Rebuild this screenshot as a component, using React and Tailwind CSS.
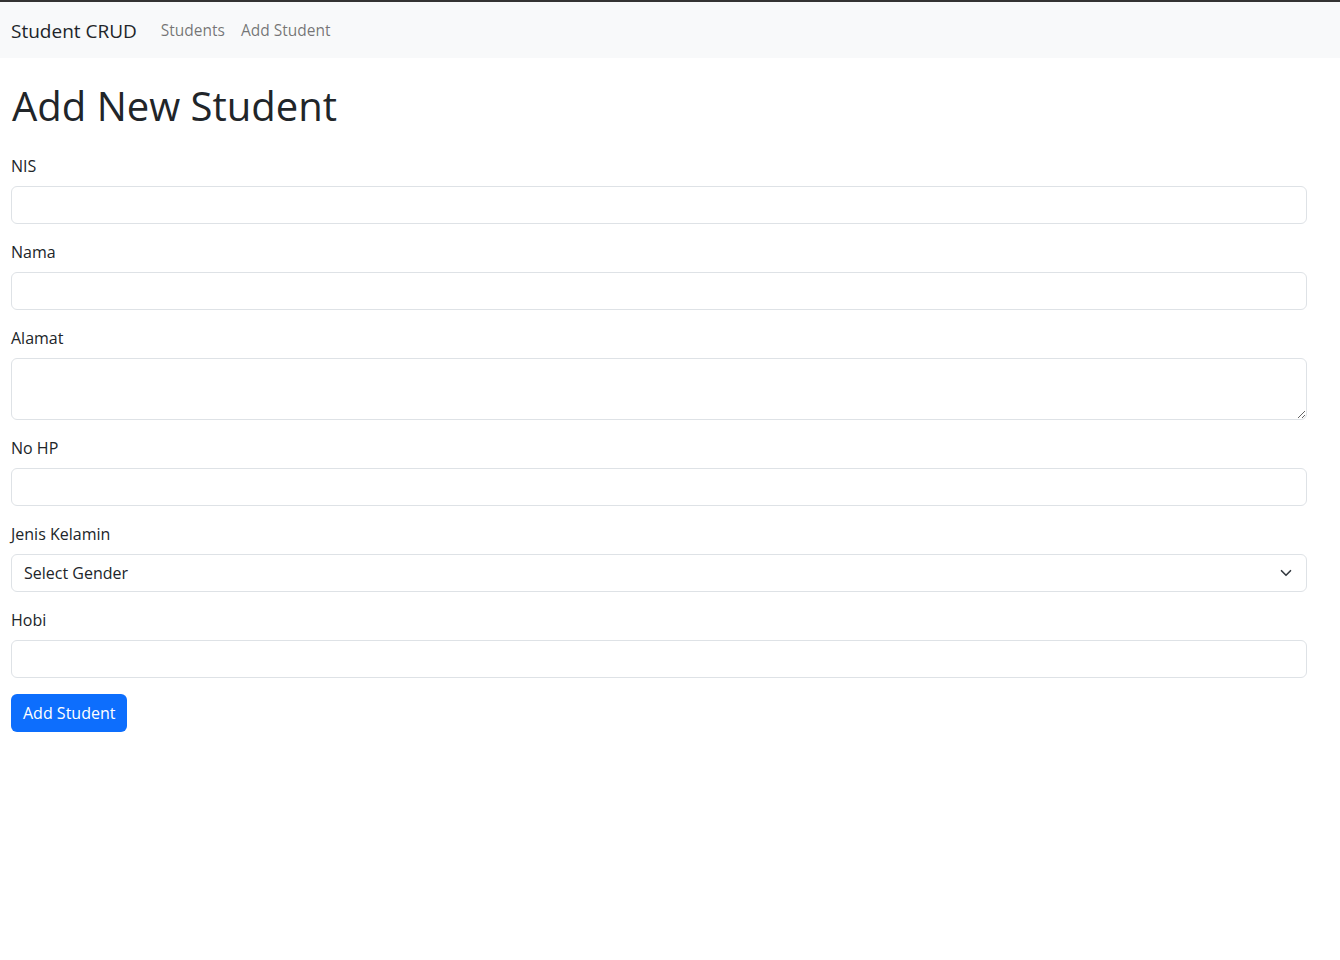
import React from 'react';

const fields = [
  { label: 'NIS', type: 'input' },
  { label: 'Nama', type: 'input' },
  { label: 'Alamat', type: 'textarea' },
  { label: 'No HP', type: 'input' },
  { label: 'Jenis Kelamin', type: 'select' },
  { label: 'Hobi', type: 'input' },
];

const controlCls =
  'block w-full rounded-[6px] border border-[#dee2e6] bg-white px-3 text-base text-[#212529] outline-none';

export default function App() {
  return (
    <div className="min-h-screen bg-white text-[#212529] font-['Open_Sans',sans-serif]">
      <div className="h-[2px] bg-[#333333]" />
      {/* Navbar */}
      <nav className="bg-[#f8f9fa] h-[56px] flex items-center px-[11px] pt-[2px]">
        <span className="text-[19px] leading-[30px] mr-4">Student CRUD</span>
        <a className="px-2 text-[15.5px] text-[rgba(0,0,0,0.55)]">Students</a>
        <a className="px-2 text-[15.5px] text-[rgba(0,0,0,0.55)]">Add Student</a>
      </nav>

      <main className="w-[1296px] ml-[11px] pt-6">
        <h1 className="text-[40px] leading-[48px] font-normal mb-6 ml-[1px]">Add New Student</h1>
        <form onSubmit={(e) => e.preventDefault()}>
          {fields.map((f) => (
            <div key={f.label} className="mb-4">
              <label className="block text-base leading-6 mb-2">{f.label}</label>
              {f.type === 'input' && <input type="text" className={`${controlCls} h-[38px]`} />}
              {f.type === 'textarea' && <textarea rows={2} className={`${controlCls} h-[62px] py-1.5 resize-y`} />}
              {f.type === 'select' && (
                <div className="relative">
                  <select className={`${controlCls} h-[38px] appearance-none pr-9`}>
                    <option>Select Gender</option>
                    <option>Laki-laki</option>
                    <option>Perempuan</option>
                  </select>
                  <svg
                    className="absolute right-[15px] top-1/2 -translate-y-1/2 pointer-events-none"
                    width="12"
                    height="12"
                    viewBox="0 0 16 16"
                    fill="none"
                    stroke="#343a40"
                    strokeWidth="2.2"
                    strokeLinecap="round"
                    strokeLinejoin="round"
                  >
                    <path d="m2 5 6 6 6-6" />
                  </svg>
                </div>
              )}
            </div>
          ))}
          <button
            type="submit"
            className="h-[38px] px-3 rounded-[6px] bg-[#0d6efd] text-white text-base"
          >
            Add Student
          </button>
        </form>
      </main>
    </div>
  );
}
